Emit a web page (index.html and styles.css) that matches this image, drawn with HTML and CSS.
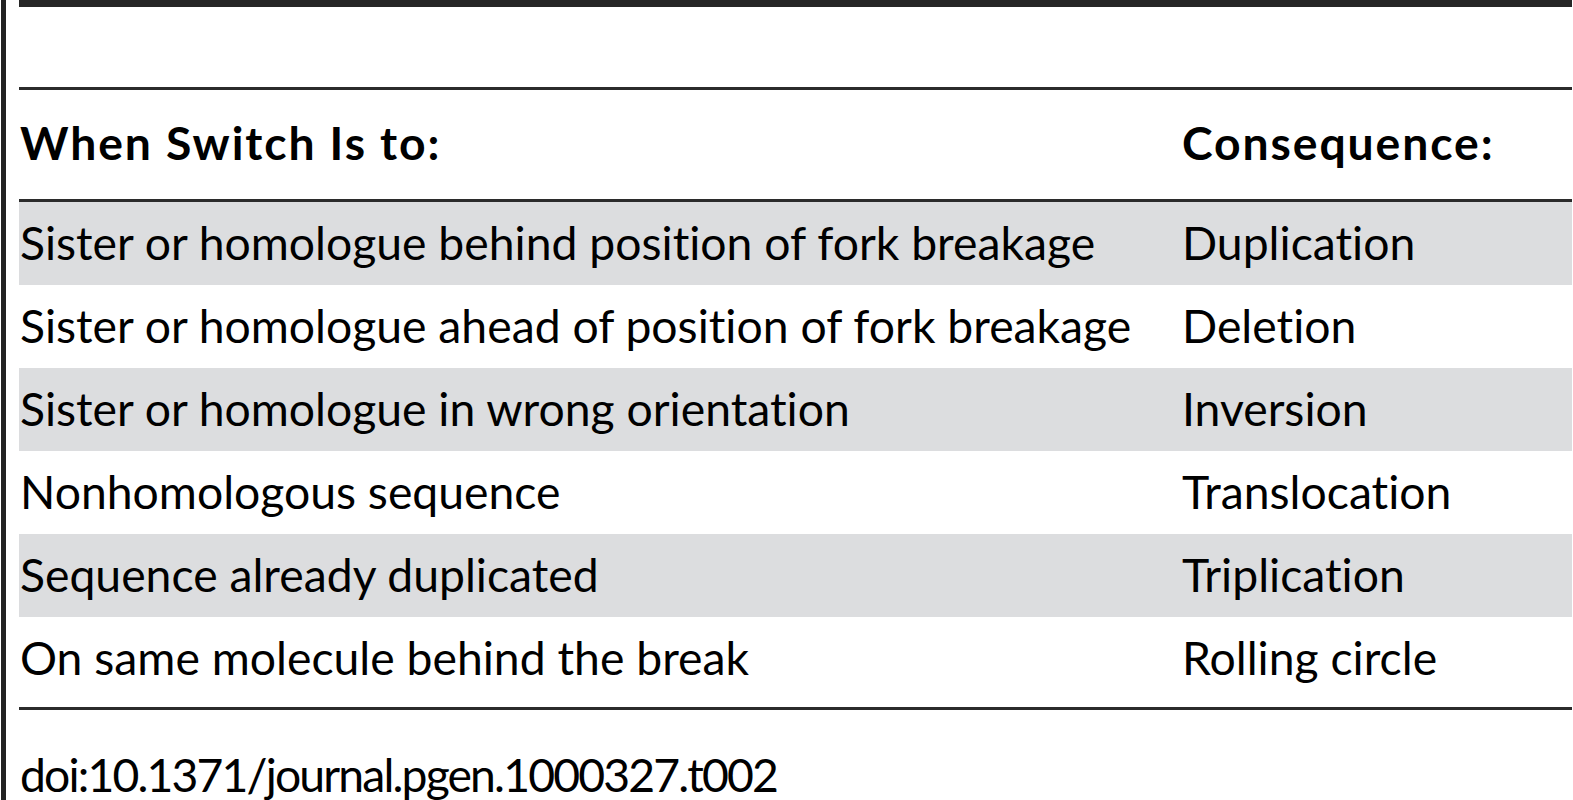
FILE: index.html
```html
<!DOCTYPE html>
<html>
<head>
<meta charset="utf-8">
<link rel="stylesheet" href="styles.css">
</head>
<body>
<div class="frame">
  <div class="panel">
    <div class="topbar"></div>
    <div class="spacer"></div>
    <table class="tbl">
      <thead>
        <tr><th class="c1">When Switch Is to:</th><th class="c2">Consequence:</th></tr>
      </thead>
      <tbody>
        <tr class="odd"><td class="c1">Sister or homologue behind position of fork breakage</td><td class="c2">Duplication</td></tr>
        <tr><td class="c1">Sister or homologue ahead of position of fork breakage</td><td class="c2">Deletion</td></tr>
        <tr class="odd"><td class="c1">Sister or homologue in wrong orientation</td><td class="c2">Inversion</td></tr>
        <tr><td class="c1">Nonhomologous sequence</td><td class="c2">Translocation</td></tr>
        <tr class="odd"><td class="c1">Sequence already duplicated</td><td class="c2">Triplication</td></tr>
        <tr class="last"><td class="c1">On same molecule behind the break</td><td class="c2">Rolling circle</td></tr>
      </tbody>
    </table>
    <div class="doi">doi:10.1371/journal.pgen.1000327.t002</div>
  </div>
</div>
</body>
</html>
```
FILE: styles.css
```css
html, body {
  margin: 0;
  padding: 0;
  background: #ffffff;
}
body {
  width: 1573px;
  height: 800px;
  overflow: hidden;
  font-family: Lato, "Liberation Sans", sans-serif;
  font-variant-ligatures: none;
  color: #000;
}
.frame {
  margin-left: 1px;
  border-left: 5px solid #222222;
  height: 800px;
  padding-left: 13px;
  padding-right: 1px;
  box-sizing: border-box;
}
.panel {
  display: flex;
  flex-direction: column;
}
.topbar {
  height: 7px;
  background: #262626;
}
.spacer {
  height: 80px;
}
.tbl {
  border-collapse: collapse;
  width: 100%;
  font-size: 46.3px;
  border-top: 3px solid #2b2b2b;
  border-bottom: 3px solid #2b2b2b;
}
.tbl th, .tbl td {
  text-align: left;
  padding: 0;
  vertical-align: top;
  white-space: nowrap;
}
.tbl thead th {
  height: 109px;
  font-weight: 700;
  line-height: 105px;
  letter-spacing: 1.9px;
  border-bottom: 3px solid #2b2b2b;
}
.tbl td {
  height: 83px;
  line-height: 81px;
}
.tbl .c1 {
  width: 1162px;
  padding-left: 1px;
}
.tbl tr.odd td {
  background: #dcdddf;
}
.tbl tr.last td {
  height: 90px;
}
.doi {
  font-size: 46.3px;
  line-height: 48px;
  letter-spacing: -1.85px;
  margin-top: 40px;
  padding-left: 1px;
}
```
